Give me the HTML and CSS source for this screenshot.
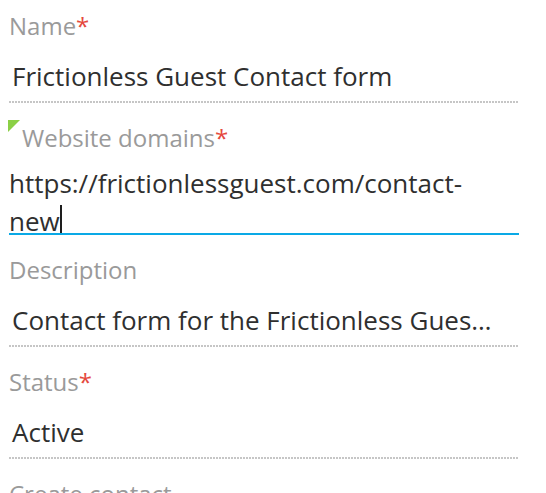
FILE: index.html
```html
<!DOCTYPE html>
<html lang="en">
<head>
<meta charset="utf-8">
<title>Contact form</title>
<link rel="stylesheet" href="styles.css">
</head>
<body>
<form class="form">
  <div class="field">
    <div class="label">Name<span class="req">*</span></div>
    <div class="value">Frictionless Guest Contact form</div>
  </div>
  <div class="field field-edit">
    <span class="changed" aria-hidden="true"></span>
    <div class="label label-changed">Website domains<span class="req">*</span></div>
    <div class="editor">https://frictionlessguest.com/contact-new<span class="caret"></span></div>
  </div>
  <div class="field">
    <div class="label">Description</div>
    <div class="value">Contact form for the Frictionless Guest website</div>
  </div>
  <div class="field">
    <div class="label">Status<span class="req">*</span></div>
    <div class="value">Active</div>
  </div>
  <div class="field">
    <div class="label">Create contact</div>
  </div>
</form>
</body>
</html>
```

FILE: styles.css
```css
html, body {
  margin: 0;
  padding: 0;
  background: #ffffff;
}

body {
  font-family: "Open Sans", "Noto Sans", "DejaVu Sans", sans-serif;
  overflow: hidden;
}

.form {
  display: flex;
  flex-direction: column;
  gap: 20px;
  width: 510px;
  padding: 11px 0 0 9px;
}

.field {
  position: relative;
  display: flex;
  flex-direction: column;
}

.label {
  font-size: 24px;
  line-height: 30px;
  color: #9a9a9a;
  white-space: nowrap;
}

.label-changed {
  padding-left: 13px;
}

.req {
  color: #e5493d;
}

.value {
  margin-top: 17px;
  padding: 0 22px 7px 3px;
  font-size: 26px;
  line-height: 36px;
  color: #2f2f2f;
  white-space: nowrap;
  overflow: hidden;
  text-overflow: ellipsis;
  border-bottom: 2px solid transparent;
  border-image: repeating-linear-gradient(90deg, #c6c6c6 0 2px, transparent 2px 3px) 0 0 2 0 / 0 0 2px 0 stretch;
}

.changed {
  position: absolute;
  left: -1px;
  top: -3px;
  width: 0;
  height: 0;
  border-top: 12px solid #8bd046;
  border-right: 12px solid transparent;
}

.editor {
  margin-top: 11px;
  padding-right: 24px;
  height: 69px;
  overflow: hidden;
  font-size: 26px;
  line-height: 38px;
  color: #2f2f2f;
  border-bottom: 2px solid #0aa9e6;
}

.caret {
  display: inline-block;
  width: 2px;
  height: 29px;
  vertical-align: -3px;
  background: #1e1e1e;
}
```
